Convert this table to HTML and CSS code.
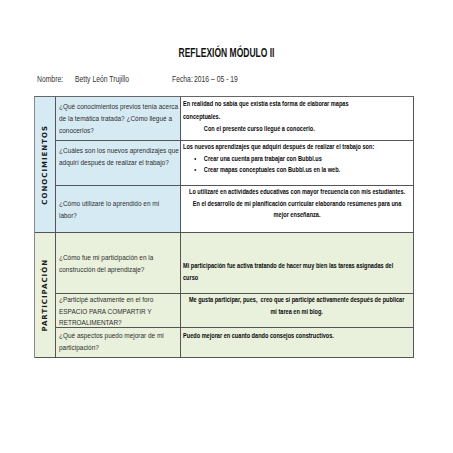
FILE: index.html
```html
<!DOCTYPE html>
<html lang="es">
<head>
<meta charset="utf-8">
<title>Reflexión Módulo II</title>
<link rel="stylesheet" href="styles.css">
</head>
<body>
<div class="page">
  <div class="title-row"><h1 class="title">REFLEXIÓN MÓDULO II</h1></div>
  <div class="info">
    <span class="info-cell info-label"><span class="sq">Nombre:</span></span>
    <span class="info-cell info-name"><span class="sq">Betty León Trujillo</span></span>
    <span class="info-cell info-date-label"><span class="sq">Fecha:</span></span>
    <span class="info-cell"><span class="sq">2016 – 05 - 19</span></span>
  </div>
  <div class="sheet">
    <div class="label label-blue"><span>CONOCIMIENTOS</span></div>
    <div class="q q-blue q-r1"><div class="txt">¿Qué conocimientos  previos tenía acerca<br>de la temática tratada? ¿Cómo llegué a<br>conocerlos?</div></div>
    <div class="a a-r1"><div class="txt">En realidad no sabía que existía esta forma de elaborar mapas<br>conceptuales.<br><span class="indent">Con el presente curso llegué a conocerlo.</span></div></div>

    <div class="q q-blue q-r2"><div class="txt">¿Cuáles son los nuevos aprendizajes que<br>adquirí después de realizar el trabajo?</div></div>
    <div class="a a-r2"><div class="txt">Los nuevos aprendizajes que adquirí después de realizar el trabajo son:
      <ul class="bullets">
        <li>Crear una cuenta para trabajar con Bubbl.us</li>
        <li>Crear mapas conceptuales con Bubbl.us en la web.</li>
      </ul></div>
    </div>

    <div class="q q-blue q-r3"><div class="txt">¿Cómo utilizaré lo aprendido en mi<br>labor?</div></div>
    <div class="a a-center a-r3"><div class="txt">Lo utilizaré en actividades educativas con mayor frecuencia con mis estudiantes.<br>En el desarrollo de mi planificación curricular elaborando resúmenes para una<br>mejor enseñanza.</div></div>

    <div class="label label-green"><span>PARTICIPACIÓN</span></div>
    <div class="q q-green q-r4"><div class="txt">¿Cómo fue mi participación en la<br>construcción del aprendizaje?</div></div>
    <div class="a a-green a-r4"><div class="txt">Mi participación fue activa tratando de hacer muy bien las tareas asignadas del<br>curso</div></div>

    <div class="q q-green q-r5"><div class="txt">¿Participé activamente en el foro<br>ESPACIO PARA COMPARTIR Y<br>RETROALIMENTAR?</div></div>
    <div class="a a-green a-center a-r5"><div class="txt">Me gusta participar, pues,&nbsp; creo que sí participé activamente después de publicar<br>mi tarea en mi blog.</div></div>

    <div class="q q-green q-r6"><div class="txt">¿Qué aspectos puedo mejorar de mi<br>participación?</div></div>
    <div class="a a-green a-r6"><div class="txt">Puedo mejorar en cuanto dando consejos constructivos.</div></div>
  </div>
</div>
</body>
</html>
```
FILE: styles.css
```css
* { box-sizing: border-box; }
html, body { margin: 0; padding: 0; background: #fff; }
body {
  width: 453px;
  height: 453px;
  font-family: "Liberation Sans", Arial, sans-serif;
  color: #222;
}
.page { padding-top: 45px; }

.title-row {
  display: flex;
  justify-content: center;
}
.title {
  margin: 0;
  font-size: 12.5px;
  line-height: 16px;
  font-weight: bold;
  color: #111;
  white-space: nowrap;
  transform: scaleX(0.68);
}

.info {
  display: flex;
  margin: 12px 0 0 37px;
  font-size: 8.5px;
  line-height: 12px;
  color: #333;
}
.info-cell { display: block; white-space: nowrap; }
.info-label { width: 38px; }
.info-name { width: 97px; }
.info-date-label { width: 22px; }
.sq {
  display: inline-block;
  transform: scaleX(0.8);
  transform-origin: 0 0;
}

.sheet {
  margin: 11px 0 0 34px;
  width: 380px;
  display: grid;
  grid-template-columns: 21px 125px minmax(0, 1fr);
  grid-template-rows: 44px 45px 47px 61px 34px 30px;
  border-top: 1px solid #666;
  border-left: 1px solid #888;
}
.label, .q, .a {
  min-width: 0;
  border-right: 1px solid #555;
  border-bottom: 1px solid #555;
}
.label {
  grid-row: span 3;
  display: flex;
  align-items: center;
  justify-content: center;
}
.label span {
  writing-mode: vertical-rl;
  transform: rotate(180deg);
  font-family: "DejaVu Sans", sans-serif;
  font-weight: bold;
  font-size: 7px;
  letter-spacing: 1px;
  color: #1a1a1a;
}
.label-blue { background: #d6eaf4; }
.label-green { background: #e9f0dc; }

.q {
  display: flex;
  align-items: flex-start;
  font-size: 7.6px;
  line-height: 12px;
  padding-left: 3px;
  color: #2e2e2e;
}
.q-blue { background: #d6eaf4; }
.q-green { background: #e9f0dc; }
.q .txt {
  flex: none;
  white-space: nowrap;
  transform: scaleX(0.85);
  transform-origin: 0 0;
}

.a {
  display: flex;
  align-items: flex-start;
  font-size: 7.5px;
  line-height: 11.5px;
  font-weight: bold;
  color: #0a0a0a;
  padding-left: 2px;
  background: #fff;
}
.a-green { background: #e9f0dc; }
.a .txt {
  flex: none;
  white-space: nowrap;
  transform: scaleX(0.745);
  transform-origin: 0 0;
}
.a-center { justify-content: center; padding-left: 0; }
.a-center .txt {
  text-align: center;
  transform-origin: 50% 0;
}
.indent { display: inline-block; padding-left: 28px; }
.bullets {
  margin: 0;
  padding: 0 0 0 15px;
  list-style: none;
}
.bullets li::before {
  content: "•";
  display: inline-block;
  width: 13px;
}

.q-r1 { padding-top: 4px; }
.a-r1 { padding-top: 1px; line-height: 12.5px; }
.q-r2 { padding-top: 4px; }
.a-r2 { padding-top: 0; }
.q-r3 { padding-top: 12px; }
.a-r3 { padding-top: 0; }
.q-r4 { padding-top: 19px; }
.a-r4 { padding-top: 27px; }
.q-r5 { padding-top: 0; line-height: 11.5px; }
.a-r5 { padding-top: 0; }
.q-r6 { padding-top: 2px; }
.a-r6 { padding-top: 2px; }
```
